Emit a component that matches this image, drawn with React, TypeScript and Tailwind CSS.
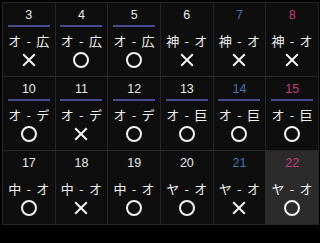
import React from "react";

type Cell = { d: number; c: "w" | "b" | "p"; line: boolean; t: string; r: "o" | "x"; today?: boolean };

const rows: Cell[][] = [
  [
    { d: 3, c: "w", line: true, t: "オ - 広", r: "x" },
    { d: 4, c: "w", line: true, t: "オ - 広", r: "o" },
    { d: 5, c: "w", line: true, t: "オ - 広", r: "o" },
    { d: 6, c: "w", line: false, t: "神 - オ", r: "x" },
    { d: 7, c: "b", line: false, t: "神 - オ", r: "x" },
    { d: 8, c: "p", line: false, t: "神 - オ", r: "x" },
  ],
  [
    { d: 10, c: "w", line: true, t: "オ - デ", r: "o" },
    { d: 11, c: "w", line: true, t: "オ - デ", r: "x" },
    { d: 12, c: "w", line: true, t: "オ - デ", r: "o" },
    { d: 13, c: "w", line: true, t: "オ - 巨", r: "o" },
    { d: 14, c: "b", line: true, t: "オ - 巨", r: "o" },
    { d: 15, c: "p", line: true, t: "オ - 巨", r: "o" },
  ],
  [
    { d: 17, c: "w", line: false, t: "中 - オ", r: "o" },
    { d: 18, c: "w", line: false, t: "中 - オ", r: "x" },
    { d: 19, c: "w", line: false, t: "中 - オ", r: "o" },
    { d: 20, c: "w", line: false, t: "ヤ - オ", r: "o" },
    { d: 21, c: "b", line: false, t: "ヤ - オ", r: "x" },
    { d: 22, c: "p", line: false, t: "ヤ - オ", r: "o", today: true },
  ],
];

function Mark({ r }: { r: "o" | "x" }) {
  if (r === "o")
    return (
      <svg width="18" height="18" viewBox="0 0 18 18" aria-label="○">
        <circle cx="9" cy="9" r="7" fill="none" stroke="#f2f2f2" strokeWidth="2" />
      </svg>
    );
  return (
    <svg width="18" height="18" viewBox="0 0 18 18" aria-label="×">
      <path d="M3.2 3.2 L14.8 14.8 M14.8 3.2 L3.2 14.8" stroke="#f2f2f2" strokeWidth="2" strokeLinecap="butt" />
    </svg>
  );
}

function DayCell({ cell }: { cell: Cell }) {
  const numColor = cell.c === "b" ? "text-[#4575b4]" : cell.c === "p" ? "text-[#c23c7c]" : "text-[#e8e8e8]";
  return (
    <div className={`flex h-[73px] flex-col items-center pt-[5px] ${cell.today ? "bg-[#2b2b2b]" : "bg-[#0e0e0e]"}`}>
      <div className={`h-[14px] text-[12.5px] leading-[14px] font-['Liberation_Sans',sans-serif] ${numColor}`}>{cell.d}</div>
      <div className={`mt-[3px] h-[2px] w-[42px] ${cell.line ? "bg-[#4a4a8e]" : "bg-transparent"}`} />
      <div className="mt-[6px] h-[16px] whitespace-nowrap pl-[1px] text-[13px] leading-[16px] tracking-[1.2px] text-[#f0f0f0] font-['Noto_Sans_CJK_JP',sans-serif]">
        {cell.t}
      </div>
      <div className="mt-[2px]">
        <Mark r={cell.r} />
      </div>
    </div>
  );
}

export default function App() {
  return (
    <div className="h-[243px] w-[320px] overflow-hidden bg-black pt-[2px] pl-[2px]">
      <div className="grid w-[317px] grid-cols-6 gap-px border border-[#262626] bg-[#262626]">
        {rows.flat().map((c) => (
          <DayCell key={c.d} cell={c} />
        ))}
      </div>
    </div>
  );
}
